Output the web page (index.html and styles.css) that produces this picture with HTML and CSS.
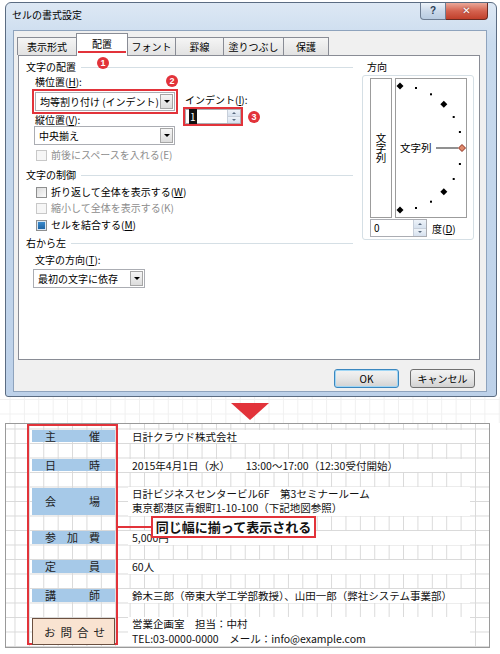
FILE: index.html
```html
<!DOCTYPE html>
<html lang="ja">
<head>
    <meta charset="UTF-8">
    <meta name="viewport" content="width=device-width, initial-scale=1.0">
    <title>セルの書式設定</title>
    <link rel="stylesheet" href="styles.css">
</head>
<body>
    <div class="dialog">
        <div class="titlebar">
            <span class="title">セルの書式設定</span>
            <div class="caption">
                <span class="cap-help">?</span>
                <span class="cap-close">✕</span>
            </div>
        </div>
        <div class="client">
            <div class="tabs">
                <span class="tab t1">表示形式</span>
                <span class="tab t2 active">配置</span>
                <span class="tab t3">フォント</span>
                <span class="tab t4">罫線</span>
                <span class="tab t5">塗りつぶし</span>
                <span class="tab t6">保護</span>
            </div>
            <div class="panel">
                <span class="mark m1">1</span>
                <span class="mark m2">2</span>
                <span class="mark m3">3</span>

                <div class="col-left">
                    <div class="group-title">文字の配置</div>
                    <div class="align-row">
                        <div class="align-left">
                            <div class="lbl">横位置(<u>H</u>):</div>
                            <div class="hilite">
                                <div class="combo combo-wide"><span class="combo-text">均等割り付け (インデント)</span><span class="combo-btn"></span></div>
                            </div>
                            <div class="lbl lbl-tight">縦位置(<u>V</u>):</div>
                            <div class="combo combo-mid"><span class="combo-text">中央揃え</span><span class="combo-btn"></span></div>
                        </div>
                        <div class="indent">
                            <div class="lbl">インデント(<u>I</u>):</div>
                            <div class="hilite">
                                <div class="spin spin-indent"><span class="spin-val"><span class="sel">1</span></span><span class="spin-btns"><i class="up"></i><i class="down"></i></span></div>
                            </div>
                        </div>
                    </div>
                    <div class="check disabled mt2"><span class="box"></span>前後にスペースを入れる(E)</div>
                    <div class="group-title mt5">文字の制御</div>
                    <div class="check mt2"><span class="box"></span>折り返して全体を表示する(<u>W</u>)</div>
                    <div class="check disabled"><span class="box"></span>縮小して全体を表示する(K)</div>
                    <div class="check checked mt1"><span class="box"></span>セルを結合する(<u>M</u>)</div>
                    <div class="group-title mt3">右から左</div>
                    <div class="lbl lbl-sub mt3">文字の方向(<u>T</u>):</div>
                    <div class="combo combo-short mt2"><span class="combo-text">最初の文字に依存</span><span class="combo-btn"></span></div>
                </div>

                <div class="col-right">
                    <div class="dir-title">方向</div>
                    <div class="dir-frame">
                        <div class="dir-boxes">
                            <div class="vbox"><span class="vtext">文字列</span></div>
                            <div class="arcbox">
                                <svg width="70" height="138" viewBox="0 0 70 138">
                                    <!-- 15度ごとの目盛り -->
                                    <polygon points="4,3.5 7.5,7 4,10.5 0.5,7" fill="#000"/>
                                    <rect x="19" y="8" width="2" height="2" fill="#000"/>
                                    <rect x="34" y="14.3" width="2" height="2" fill="#000"/>
                                    <polygon points="47.8,21.7 51.3,25.2 47.8,28.7 44.3,25.2" fill="#000"/>
                                    <rect x="56.7" y="37" width="2" height="2" fill="#000"/>
                                    <rect x="62.9" y="52" width="2" height="2" fill="#000"/>
                                    <rect x="62.9" y="84" width="2" height="2" fill="#000"/>
                                    <rect x="56.7" y="99" width="2" height="2" fill="#000"/>
                                    <polygon points="47.8,109.3 51.3,112.8 47.8,116.3 44.3,112.8" fill="#000"/>
                                    <rect x="34" y="121.7" width="2" height="2" fill="#000"/>
                                    <rect x="19" y="128" width="2" height="2" fill="#000"/>
                                    <polygon points="4,127.5 7.5,131 4,134.5 0.5,131" fill="#000"/>
                                    <line x1="40" y1="69" x2="62" y2="69" stroke="#555" stroke-width="1.3"/>
                                    <polygon points="66,65.5 69.5,69 66,72.5 62.5,69" fill="#e08a6c" stroke="#8b2c1c" stroke-width="1"/>
                                    <text x="4" y="73" class="arc-text">文字列</text>
                                </svg>
                            </div>
                        </div>
                        <div class="deg-row">
                            <div class="spin spin-deg"><span class="spin-val">0</span><span class="spin-btns"><i class="up"></i><i class="down"></i></span></div>
                            <span class="deg-lbl">度(<u>D</u>)</span>
                        </div>
                    </div>
                </div>
            </div>
            <div class="buttons">
                <span class="btn btn-ok">OK</span>
                <span class="btn">キャンセル</span>
            </div>
        </div>
    </div>

    <div class="gap"><span class="arrow"></span></div>

    <div class="sheet">
        <div class="heads">
            <div class="head r1"><span>主</span><span>催</span></div>
            <div class="head r3"><span>日</span><span>時</span></div>
            <div class="head r5"><span>会</span><span>場</span></div>
            <div class="head r8"><span>参</span><span>加</span><span>費</span></div>
            <div class="head r10"><span>定</span><span>員</span></div>
            <div class="head r12"><span>講</span><span>師</span></div>
            <div class="head contact r14"><span>お</span><span>問</span><span>合</span><span>せ</span></div>
        </div>
        <div class="vals">
            <div class="val r1">日計クラウド株式会社</div>
            <div class="val r3">2015年4月1日（水）　　13:00～17:00（12:30受付開始）</div>
            <div class="val two r5">日計ビジネスセンタービル6F　第3セミナールーム<br>東京都港区青銀町1-10-100（下記地図参照）</div>
            <div class="val r8">5,000円</div>
            <div class="val r10">60人</div>
            <div class="val r12">鈴木三郎（帝東大学工学部教授）、山田一郎（弊社システム事業部）</div>
            <div class="val two r14">営業企画室　担当：中村<br>TEL:03-0000-0000　メール：info@example.com</div>
        </div>
        <span class="connector"></span>
        <div class="callout">同じ幅に揃って表示される</div>
    </div>
</body>
</html>
```

FILE: styles.css
```css
* {
    margin: 0;
    padding: 0;
    box-sizing: border-box;
}

body {
    width: 500px;
    height: 654px;
    overflow: hidden;
    background-color: #fff;
    font-family: "Noto Sans CJK JP", sans-serif;
    color: #000;
}

u {
    text-decoration: underline;
    text-underline-offset: 1px;
}

/* ダイアログ本体 */
.dialog {
    width: 492px;
    height: 395px;
    margin: 2px 0 0 5px;
    border: 1px solid #5b6c82;
    border-radius: 6px 6px 3px 3px;
    background: linear-gradient(#dde8f4, #c9dbee 40px, #bdd1e9);
    padding: 0 9px 4px 7px;
    display: flex;
    flex-direction: column;
}

.titlebar {
    height: 27px;
    display: flex;
    align-items: flex-start;
}

.title {
    margin: 4px 0 0 -1px;
    font-size: 10px;
    line-height: 16px;
    color: #000;
}

.caption {
    margin-left: auto;
    margin-right: -1px;
    display: flex;
}

.cap-help {
    width: 26px;
    height: 17px;
    border: 1px solid #6d7d93;
    border-top: none;
    border-radius: 0 0 0 4px;
    background: linear-gradient(#edf3f9, #cbd9ea 50%, #b8cbe1);
    font: bold 10px/16px "Liberation Sans", sans-serif;
    color: #2c3e55;
    text-align: center;
}

.cap-close {
    width: 42px;
    height: 17px;
    border: 1px solid #6b2a21;
    border-top: none;
    border-left: none;
    border-radius: 0 0 4px 0;
    background: linear-gradient(#eaa899, #d4624f 50%, #c1402b);
    font: bold 10px/16px "DejaVu Sans", sans-serif;
    color: #fff;
    text-align: center;
    text-shadow: 0 0 2px #6b2a21;
}

.client {
    flex: 1;
    background-color: #f0f0f0;
    border: 1px solid #8ea3bd;
    padding: 2px 6px 0 4px;
    display: flex;
    flex-direction: column;
}

/* タブ */
.tabs {
    height: 22px;
    margin-left: -1px;
    display: flex;
    align-items: flex-end;
}

.tab {
    height: 18px;
    border: 1px solid #898c95;
    border-bottom: none;
    background: linear-gradient(#f5f5f5, #e2e2e2);
    font-size: 10px;
    line-height: 17px;
    text-align: center;
    margin-right: -1px;
}

.t1 { width: 60px; }
.t2 { width: 52px; }
.t3 { width: 49px; }
.t4 { width: 49px; }
.t5 { width: 61px; }
.t6 { width: 46px; }

.tab.active {
    height: 23px;
    margin-bottom: -1px;
    background: #fff;
    line-height: 20px;
    position: relative;
    z-index: 2;
}

.tab.active::after {
    content: "";
    position: absolute;
    left: 1px;
    right: 1px;
    bottom: 3px;
    height: 2px;
    background-color: #e2333a;
}

.panel {
    height: 305px;
    border: 1px solid #898c95;
    background-color: #fff;
    padding: 4px 0 0 7px;
    display: flex;
    gap: 9px;
    position: relative;
    font-size: 10px;
}

/* 丸数字 */
.mark {
    position: absolute;
    width: 12px;
    height: 12px;
    border-radius: 50%;
    background-color: #e2333a;
    color: #fff;
    font: bold 9px/12px "Liberation Sans", sans-serif;
    text-align: center;
    z-index: 3;
}

.m1 { left: 78px; top: 1px; }
.m2 { left: 147px; top: 19px; }
.m3 { left: 229px; top: 55px; }

.col-left {
    width: 327px;
    display: flex;
    flex-direction: column;
}

.group-title {
    height: 14px;
    line-height: 14px;
    display: flex;
    align-items: center;
}

.group-title::after {
    content: "";
    flex: 1;
    height: 1px;
    margin-left: 5px;
    background-color: #d5dfe5;
}

.mt1 { margin-top: 1px; }
.mt2 { margin-top: 2px; }
.mt3 { margin-top: 3px; }
.mt5 { margin-top: 5px; }

.lbl {
    height: 14px;
    line-height: 14px;
    padding-left: 3px;
    white-space: nowrap;
}

.lbl-tight {
    height: 12px;
    line-height: 11px;
}

.lbl-sub {
    padding-left: 9px;
}

.align-row {
    margin-top: 1px;
    display: flex;
}

.align-left {
    width: 146px;
    margin-left: 6px;
}

.hilite {
    border: 2px solid #e2333a;
    padding: 1px;
}

.indent {
    margin-left: 5px;
    padding-top: 18px;
}

.indent .lbl {
    padding-left: 2px;
}

.indent .hilite {
    width: 60px;
    padding: 0;
}

/* コンボボックス */
.combo {
    height: 19px;
    border: 1px solid #abadb3;
    background-color: #fff;
    display: flex;
    align-items: center;
}

.combo-wide { width: 140px; }
.combo-mid { width: 141px; margin-left: 2px; }
.combo-short { width: 112px; margin-left: 7px; }

.combo-text {
    flex: 1;
    padding-left: 4px;
    line-height: 17px;
    white-space: nowrap;
    overflow: hidden;
}

.combo-btn {
    width: 13px;
    height: 15px;
    margin-right: 1px;
    border: 1px solid #a6a6a6;
    background: linear-gradient(#f6f6f6, #dcdcdc);
    display: flex;
    align-items: center;
    justify-content: center;
}

.combo-btn::before {
    content: "";
    border-left: 3px solid transparent;
    border-right: 3px solid transparent;
    border-top: 3px solid #000;
}

/* スピンボタン */
.spin {
    height: 15px;
    border: 1px solid #abadb3;
    background-color: #fff;
    display: flex;
}

.spin-deg {
    width: 57px;
    height: 18px;
}

.spin-val {
    flex: 1;
    padding-left: 3px;
    font-size: 10px;
    line-height: 14px;
}

.spin-deg .spin-val {
    line-height: 16px;
}

.sel {
    background-color: #111;
    color: #fff;
    padding: 0 1px;
}

.spin-btns {
    width: 13px;
    display: flex;
    flex-direction: column;
    border-left: 1px solid #c7cfda;
}

.spin-btns i {
    flex: 1;
    background: linear-gradient(#eef3f9, #d6e1ee);
    display: flex;
    align-items: center;
    justify-content: center;
}

.spin-btns i + i {
    border-top: 1px solid #c7cfda;
}

.spin-btns .up::before {
    content: "";
    border-left: 2px solid transparent;
    border-right: 2px solid transparent;
    border-bottom: 2px solid #5a6b80;
}

.spin-btns .down::before {
    content: "";
    border-left: 2px solid transparent;
    border-right: 2px solid transparent;
    border-top: 2px solid #5a6b80;
}

/* チェックボックス */
.check {
    height: 16px;
    line-height: 16px;
    padding-left: 10px;
    display: flex;
    align-items: center;
    white-space: nowrap;
}

.check .box {
    width: 11px;
    height: 11px;
    margin-right: 4px;
    border: 1px solid #8e8f8f;
    background: linear-gradient(135deg, #dcdcdc, #fbfbfb);
}

.check.disabled {
    color: #8d8d8d;
}

.check.disabled .box {
    border-color: #c8c8c8;
    background: #f6f6f6;
}

.check.checked .box {
    border-color: #8e8f8f;
    background: linear-gradient(#3d8fd1, #1c5f9e);
    box-shadow: inset 0 0 0 1px #d7e6f4;
}

/* 方向 */
.col-right {
    width: 112px;
    display: flex;
    flex-direction: column;
}

.dir-title {
    height: 14px;
    line-height: 14px;
    padding-left: 5px;
}

.dir-frame {
    height: 165px;
    margin-top: 1px;
    border: 1px solid #d5dfe5;
    border-radius: 3px;
    padding: 2px 0 0 7px;
}

.dir-boxes {
    display: flex;
    gap: 3px;
}

.vbox {
    width: 22px;
    height: 140px;
    border: 1px solid #9c9c9c;
    display: flex;
    align-items: center;
    justify-content: center;
}

.vtext {
    writing-mode: vertical-rl;
    font-size: 10.5px;
    letter-spacing: -0.5px;
}

.arcbox {
    width: 72px;
    height: 140px;
    border: 1px solid #9c9c9c;
}

.arcbox svg {
    display: block;
}

.arc-text {
    font-family: "Noto Sans CJK JP", sans-serif;
    font-size: 10.5px;
}

.deg-row {
    margin-top: 1px;
    display: flex;
    align-items: center;
}

.deg-lbl {
    margin-left: 5px;
}

/* ボタン */
.buttons {
    margin-top: 9px;
    margin-right: 5px;
    display: flex;
    justify-content: flex-end;
    gap: 11px;
}

.btn {
    width: 65px;
    height: 19px;
    border: 1px solid #707070;
    border-radius: 3px;
    background: linear-gradient(#f3f3f3, #e6e6e6 50%, #d2d2d2);
    font-size: 10px;
    line-height: 17px;
    text-align: center;
}

.btn-ok {
    border-color: #3b87bf;
    box-shadow: inset 0 0 0 1px #9fd6f5;
}

/* 矢印 */
.gap {
    height: 26px;
    display: flex;
    justify-content: center;
    background-image:
        linear-gradient(#f0f0f0 1px, transparent 1px),
        linear-gradient(90deg, #f0f0f0 1px, transparent 1px);
    background-size: 14.4px 14.5px;
    background-position: 9.5px 2px;
}

.arrow {
    margin-top: 6px;
    border-left: 19px solid transparent;
    border-right: 19px solid transparent;
    border-top: 17px solid #e2333a;
    height: 0;
}

/* 表 */
.sheet {
    width: 485px;
    height: 225px;
    margin-left: 5px;
    border: 1px solid #9a9a9a;
    position: relative;
    display: flex;
    background-color: #fff;
    background-image:
        linear-gradient(#d9d9d9 1px, transparent 1px),
        linear-gradient(90deg, #d9d9d9 1px, transparent 1px);
    background-size: 14.4px 14.5px;
    background-position: 8.5px 4.5px;
}

.heads {
    width: 91px;
    height: 221px;
    margin: 0 0 0 21px;
    border: 2px solid #e2333a;
    padding: 2.5px 1px 0 3px;
    display: grid;
    grid-template-rows: repeat(15, 14.5px);
}

.head {
    margin: 1px 0;
    background-color: #a6c9e8;
    display: flex;
    align-items: center;
    justify-content: space-between;
    padding: 0 15px 0 13px;
    font-size: 11px;
    line-height: 12px;
    color: #222;
}

.contact {
    background-color: #f9e3d1;
    border: 1px solid #6b5040;
    padding: 0 9px 0 11px;
    font-size: 11.5px;
}

.r1 { grid-row: 1; }
.r3 { grid-row: 3; }
.r5 { grid-row: 5 / 7; }
.r8 { grid-row: 8; }
.r10 { grid-row: 10; }
.r12 { grid-row: 12; }
.r14 { grid-row: 14 / 16; }

.vals {
    width: 342px;
    margin-left: 10px;
    padding-top: 4.5px;
    display: grid;
    grid-template-rows: repeat(15, 14.5px);
}

.val {
    margin-top: 1px;
    background-color: #fff;
    padding-left: 4px;
    font-size: 10.5px;
    line-height: 13.5px;
    white-space: nowrap;
    color: #111;
}

.val.two {
    line-height: 14.5px;
    margin-top: 0;
}

.connector {
    position: absolute;
    left: 112px;
    top: 102px;
    width: 34px;
    height: 2px;
    background-color: #e2333a;
}

.callout {
    position: absolute;
    left: 145px;
    top: 92px;
    width: 165px;
    height: 22px;
    border: 2px solid #e2333a;
    background-color: #fff;
    font-size: 13px;
    font-weight: bold;
    line-height: 18px;
    text-align: center;
    color: #111;
}
```
